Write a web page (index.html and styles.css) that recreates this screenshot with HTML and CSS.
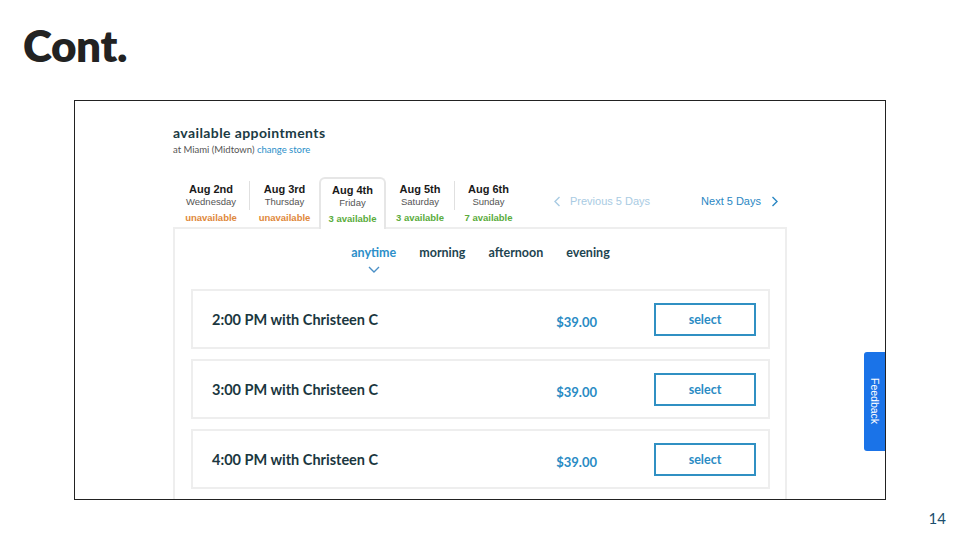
FILE: index.html
```html
<!DOCTYPE html>
<html>
<head>
<meta charset="utf-8">
<link rel="stylesheet" href="styles.css">
</head>
<body>
<h1 class="title">Cont.</h1>
<div class="frame">
  <div class="appt">
    <h2 class="appt-title">available appointments</h2>
    <p class="store">at Miami (Midtown) <span class="link">change store</span></p>
    <div class="days">
      <div class="tab t1"><b>Aug 2nd</b><span class="wd">Wednesday</span><span class="st un">unavailable</span></div>
      <span class="divider"></span>
      <div class="tab t2"><b>Aug 3rd</b><span class="wd">Thursday</span><span class="st un">unavailable</span></div>
      <div class="tab t3 active"><b>Aug 4th</b><span class="wd">Friday</span><span class="st av">3 available</span></div>
      <div class="tab t4"><b>Aug 5th</b><span class="wd">Saturday</span><span class="st av">3 available</span></div>
      <span class="divider"></span>
      <div class="tab t5"><b>Aug 6th</b><span class="wd">Sunday</span><span class="st av">7 available</span></div>
      <div class="pager">
        <span class="prev"><svg width="8" height="11" viewBox="0 0 8 11"><path d="M6.5 1 L2 5.5 L6.5 10" fill="none" stroke="currentColor" stroke-width="1.4"/></svg>Previous 5 Days</span>
        <span class="next">Next 5 Days<svg width="8" height="11" viewBox="0 0 8 11"><path d="M1.5 1 L6 5.5 L1.5 10" fill="none" stroke="currentColor" stroke-width="1.4"/></svg></span>
      </div>
    </div>
    <div class="panel">
      <div class="filters">
        <div class="filter on">anytime<svg width="12" height="7" viewBox="0 0 12 7"><path d="M1 1 L6 6 L11 1" fill="none" stroke="currentColor" stroke-width="1.4"/></svg></div>
        <div class="filter">morning</div>
        <div class="filter">afternoon</div>
        <div class="filter">evening</div>
      </div>
      <div class="slot"><span class="time">2:00 PM with Christeen C</span><span class="price">$39.00</span><span class="btn">select</span></div>
      <div class="slot"><span class="time">3:00 PM with Christeen C</span><span class="price">$39.00</span><span class="btn">select</span></div>
      <div class="slot"><span class="time">4:00 PM with Christeen C</span><span class="price">$39.00</span><span class="btn">select</span></div>
    </div>
  </div>
</div>
<div class="feedback">Feedback</div>
<div class="page-num">14</div>
</body>
</html>
```
FILE: styles.css
```css
html, body {
  margin: 0;
  padding: 0;
}
body {
  width: 960px;
  height: 540px;
  position: relative;
  background: #fff;
  font-family: "Lato", "Open Sans", sans-serif;
  overflow: hidden;
}
.title {
  margin: 0;
  height: 100px;
  box-sizing: border-box;
  padding: 23px 0 0 23px;
  font-family: "Lato", sans-serif;
  font-weight: 800;
  font-size: 44px;
  line-height: 44px;
  color: #222;
  letter-spacing: -0.4px;
}
.frame {
  margin-left: 74px;
  width: 812px;
  height: 400px;
  box-sizing: border-box;
  border: 1px solid #222;
  overflow: hidden;
}
.appt {
  padding: 24px 98px 0 98px;
}
.appt-title {
  margin: 0;
  font-size: 14px;
  line-height: 16px;
  font-weight: 700;
  letter-spacing: 0.4px;
  color: #1b3a44;
}
.store {
  margin: 3px 0 0;
  font-size: 9.5px;
  line-height: 12px;
  color: #555;
}
.link {
  color: #2b8fc9;
}
.days {
  margin-top: 21px;
  height: 50px;
  display: flex;
  align-items: stretch;
  font-family: "Liberation Sans", Arial, sans-serif;
}
.tab {
  display: flex;
  flex-direction: column;
  align-items: center;
  box-sizing: border-box;
  padding-top: 6px;
}
.tab b {
  font-size: 11px;
  line-height: 13px;
  color: #1a1a1a;
}
.tab .wd {
  font-size: 9.5px;
  line-height: 12px;
  color: #555;
}
.tab .st {
  margin-top: 4px;
  font-size: 9.5px;
  line-height: 12px;
  font-weight: 700;
}
.un { color: #e0883a; }
.av { color: #5aac3c; }
.t1 { width: 76px; }
.t2 { width: 69px; }
.t3 { width: 67px; }
.t4 { width: 68px; }
.t5 { width: 67px; }
.active {
  position: relative;
  z-index: 1;
  background: #fff;
  border: 2px solid #e6e6e6;
  border-bottom: none;
  border-radius: 6px 6px 0 0;
  margin-bottom: -2px;
  padding-top: 5px;
}
.divider {
  align-self: flex-start;
  margin-top: 4px;
  width: 1px;
  height: 29px;
  background: #e0e0e0;
}
.pager {
  flex: 1;
  align-self: flex-start;
  margin-top: 18px;
  display: flex;
  justify-content: space-between;
  padding: 0 8px 0 31px;
  font-size: 11px;
  line-height: 13px;
}
.prev, .next {
  display: flex;
  align-items: center;
}
.prev {
  color: #a9cbe3;
}
.prev svg {
  margin-right: 9px;
}
.next {
  color: #2a87c3;
}
.next svg {
  margin-left: 10px;
}
.panel {
  border: 2px solid #eee;
  padding: 16px 15px 30px 16px;
}
.filters {
  height: 44px;
  display: flex;
  justify-content: center;
  align-items: flex-start;
  gap: 23px;
}
.filter {
  display: flex;
  flex-direction: column;
  align-items: center;
  font-size: 12.5px;
  line-height: 15px;
  font-weight: 700;
  color: #1d4450;
}
.filter.on {
  color: #2d8fc9;
}
.filter svg {
  margin-top: 6px;
  color: #4a8fc6;
}
.slot {
  height: 60px;
  box-sizing: border-box;
  border: 2px solid #eee;
  margin-bottom: 10px;
  display: flex;
  align-items: center;
  padding: 0 12px 0 19px;
}
.time {
  flex: 1;
  font-size: 14.5px;
  font-weight: 700;
  color: #1b3740;
}
.price {
  margin-top: 6px;
  font-size: 13px;
  font-weight: 700;
  color: #2a8bc4;
}
.btn {
  margin-left: 57px;
  width: 102px;
  height: 33px;
  box-sizing: border-box;
  border: 2px solid #3090c3;
  display: flex;
  align-items: center;
  justify-content: center;
  font-size: 12.5px;
  font-weight: 700;
  color: #2a8bc4;
}
.feedback {
  position: absolute;
  left: 864px;
  top: 352px;
  width: 21px;
  height: 99px;
  background: #1a73e8;
  border-radius: 3px 0 0 3px;
  color: #fff;
  writing-mode: vertical-rl;
  font-family: "Liberation Sans", Arial, sans-serif;
  font-size: 10.5px;
  display: flex;
  align-items: center;
  justify-content: center;
}
.page-num {
  margin-top: 9px;
  text-align: right;
  padding-right: 14px;
  font-size: 15px;
  line-height: 18px;
  color: #1b4f6e;
}
```
